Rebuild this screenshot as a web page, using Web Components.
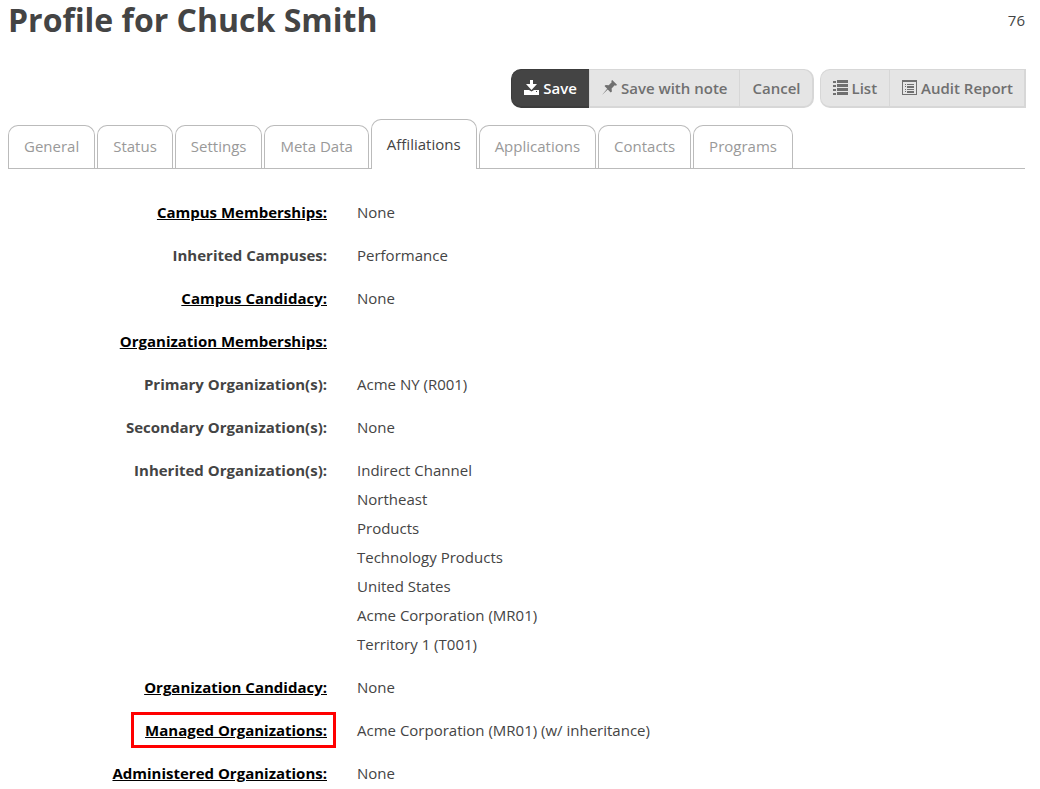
<!DOCTYPE html>
<html lang="en">
<head>
<meta charset="utf-8">
<meta name="viewport" content="width=device-width, initial-scale=1">
<title>Profile for Chuck Smith</title>
<style>
  body { margin: 0; background: #fff; color: #444; font: 15px/29px "Open Sans", sans-serif; }
</style>
</head>
<body>
<profile-page heading="Profile for Chuck Smith" record="76">
  <button-group slot="actions">
    <action-button variant="primary" icon="save" edge="start">Save</action-button>
    <action-button icon="pin">Save with note</action-button>
    <action-button edge="end">Cancel</action-button>
  </button-group>
  <button-group slot="actions">
    <action-button icon="list" edge="start">List</action-button>
    <action-button icon="report">Audit Report</action-button>
  </button-group>
  <tab-strip slot="tabs">
    <tab-item>General</tab-item>
    <tab-item>Status</tab-item>
    <tab-item>Settings</tab-item>
    <tab-item>Meta Data</tab-item>
    <tab-item active>Affiliations</tab-item>
    <tab-item>Applications</tab-item>
    <tab-item>Contacts</tab-item>
    <tab-item>Programs</tab-item>
  </tab-strip>
  <detail-row label="Campus Memberships:" link><div>None</div></detail-row>
  <detail-row label="Inherited Campuses:"><div>Performance</div></detail-row>
  <detail-row label="Campus Candidacy:" link><div>None</div></detail-row>
  <detail-row label="Organization Memberships:" link></detail-row>
  <detail-row label="Primary Organization(s):"><div>Acme NY (R001)</div></detail-row>
  <detail-row label="Secondary Organization(s):"><div>None</div></detail-row>
  <detail-row label="Inherited Organization(s):">
    <div>Indirect Channel</div>
    <div>Northeast</div>
    <div>Products</div>
    <div>Technology Products</div>
    <div>United States</div>
    <div>Acme Corporation (MR01)</div>
    <div>Territory 1 (T001)</div>
  </detail-row>
  <detail-row label="Organization Candidacy:" link><div>None</div></detail-row>
  <detail-row label="Managed Organizations:" link marked><div>Acme Corporation (MR01) (w/ inheritance)</div></detail-row>
  <detail-row label="Administered Organizations:" link><div>None</div></detail-row>
</profile-page>

<script>
const ICONS = {
  save: '<path d="M6 0h3v4h4L7.500 10 2 4h4z"/><path d="M0 10h5l2.500 1.500L10 10h5v5H0z"/><path d="M12 11h1v1h-1z" fill="#444"/>',
  pin: '<path d="M10.200 0L15 4.800l-1 .9-1.300-.4-3.100 3.100.3 3-1.200 1.200-3-3L0 15l5.200-6.200-2.700-2.700 1.200-1.100 3 .3 3-3-.4-1.300z"/>',
  list: '<path d="M0 1h3v2H0zM4 0h11v3H4zM0 5h3v2H0zM4 4h11v3H4zM0 9h3v2H0zM4 8h11v3H4zM0 13h3v2H0zM4 12h11v3H4z"/>',
  report: '<path fill-rule="evenodd" d="M0 0h15v15H0zM1 2v12h13V2z"/><path d="M3 4h1v1H3zM5 4h7v1H5zM3 6h1v1H3zM5 6h7v2H5zM3 9h1v1H3zM5 9h7v1H5zM3 11h1v1H3zM5 11h7v2H5z"/>'
};

class BaseElement extends HTMLElement {
  connectedCallback() {
    if (!this.shadowRoot) this.attachShadow({ mode: 'open' }).innerHTML = this.view();
  }
}

customElements.define('profile-page', class extends BaseElement {
  view() {
    return `<style>
      :host { display: block; padding: 0 15px 0 8px; }
      header { display: flex; justify-content: space-between; align-items: center; height: 40px; }
      h1 { margin: 0; font-size: 32px; line-height: 40px; font-weight: 700; }
      .actions { display: flex; flex-wrap: wrap; justify-content: flex-end; gap: 6px; margin-right: -1px; padding: 29px 0 11px; }
      main { display: grid; gap: 14px; padding-top: 29px; }
    </style>
    <header><h1>${this.getAttribute('heading')}</h1><span>${this.getAttribute('record')}</span></header>
    <div class="actions"><slot name="actions"></slot></div>
    <slot name="tabs"></slot>
    <main><slot></slot></main>`;
  }
});

customElements.define('button-group', class extends BaseElement {
  view() {
    return `<style>:host { display: flex; }</style><slot></slot>`;
  }
});

customElements.define('action-button', class extends BaseElement {
  view() {
    const icon = ICONS[this.getAttribute('icon')];
    return `<style>
      :host { display: block; }
      button { display: flex; align-items: center; gap: 4px; height: 39px; margin: 0; padding: 0 12px;
        border: 1px solid #d7d7d7; border-right-width: 0; border-bottom-width: 2px; border-radius: 0;
        background: #e5e5e5; color: #707070; font: 600 15px/36px "Open Sans", sans-serif; cursor: pointer; }
      :host(:last-child) button { border-right-width: 2px; padding-right: 11px; }
      :host([edge=start]) button { border-radius: 10px 0 0 10px; }
      :host([edge=end]) button { border-radius: 0 10px 10px 0; }
      :host([variant=primary]) button { background: #444; border-color: #3c3c3c; color: #fff; }
      svg { display: block; margin-bottom: 2px; fill: currentColor; }
    </style>
    <button type="button">${icon ? `<svg width="15" height="15" viewBox="0 0 15 15" aria-hidden="true">${icon}</svg>` : ''}<span><slot></slot></span></button>`;
  }
});

customElements.define('tab-strip', class extends BaseElement {
  view() {
    return `<style>
      :host { display: block; border-bottom: 1px solid #bbb; }
      div { display: flex; align-items: flex-end; gap: 2px; }
    </style><div role="tablist"><slot></slot></div>`;
  }
});

customElements.define('tab-item', class extends BaseElement {
  view() {
    return `<style>
      :host { display: block; }
      button { display: block; height: 43px; margin: 0; padding: 0 15px 2px; border: 1px solid #bbb; border-bottom: 0;
        border-radius: 10px 10px 0 0; background: #fff; color: #999; font: 15px/40px "Open Sans", sans-serif; cursor: pointer; }
      :host([active]) { margin-bottom: -1px; }
      :host([active]) button { height: 50px; color: #444; }
    </style><button type="button" role="tab" aria-selected="${this.hasAttribute('active')}"><slot></slot></button>`;
  }
});

customElements.define('detail-row', class extends BaseElement {
  view() {
    const label = this.getAttribute('label');
    return `<style>
      :host { display: grid; grid-template-columns: minmax(0, 1fr) minmax(0, 2fr); margin: 0 -15px; }
      .label, .value { padding: 0 15px; }
      .label { text-align: right; font-weight: 700; }
      a { position: relative; color: #000; }
      :host([marked]) a::after { content: ""; position: absolute; inset: -8px -9px -8px -14px; border: 3px solid #f00; }
    </style>
    <div class="label">${this.hasAttribute('link') ? `<a href="#">${label}</a>` : label}</div>
    <div class="value"><slot></slot></div>`;
  }
});
</script>
</body>
</html>
